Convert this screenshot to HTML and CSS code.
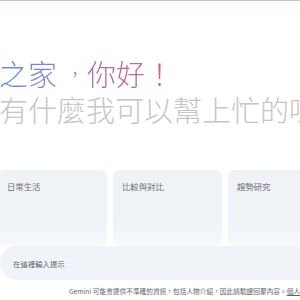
FILE: index.html
```html
<!DOCTYPE html>
<html lang="zh-Hant">
<head>
<meta charset="utf-8">
<link rel="stylesheet" href="styles.css">
</head>
<body>
<div class="topline"></div>
<main class="page">
  <h1 class="greeting">
    <span class="hello">之家<span class="comma">，</span>你好！</span>
    <span class="ask">有什麼我可以幫上忙的嗎？</span>
  </h1>
  <div class="cards">
    <div class="card">日常生活</div>
    <div class="card">比較與對比</div>
    <div class="card">趨勢研究</div>
  </div>
  <div class="prompt">在這裡輸入提示</div>
  <p class="footer">Gemini 可能會提供不準確的資訊，包括人物介紹，因此請驗證回覆內容。<a href="#">個人資料與 Gemini 應用程式</a></p>
</main>
</body>
</html>
```
FILE: styles.css
```css
html, body {
  margin: 0;
  padding: 0;
  background: #ffffff;
  width: 300px;
  height: 300px;
  overflow: hidden;
}
body {
  font-family: "Noto Sans CJK TC", "Noto Sans", sans-serif;
}
.topline {
  height: 1px;
  background: #b7d1b6;
}
.page {
  display: flex;
  flex-direction: column;
}
.greeting {
  margin: 54px 0 0 -1px;
  font-size: 29px;
  font-weight: 300;
  line-height: 36px;
  white-space: nowrap;
  display: flex;
  flex-direction: column;
}
.hello {
  display: inline-block;
  height: 36px;
  width: max-content;
  background: linear-gradient(90deg, #5b8cf0 0%, #8a7bd8 40%, #b46ea8 62%, #d85f6c 100%);
  -webkit-background-clip: text;
  background-clip: text;
  color: transparent;
}
.comma {
  display: inline-block;
  color: #9d77c8;
  font-size: 16px;
  line-height: 16px;
  width: 30px;
  text-align: center;
  vertical-align: baseline;
  transform: translate(3px, -6px);
}
.ask {
  color: #c4c7c5;
}
.cards {
  margin: 43px 0 0 -2px;
  display: flex;
  gap: 6px;
}
.card {
  flex: 0 0 109px;
  height: 76px;
  box-sizing: border-box;
  padding: 10px 9px;
  border-radius: 7px;
  background: linear-gradient(180deg, #eff2f7 0%, #eff2f7 68%, #f7f9fb 100%);
  font-size: 8.4px;
  line-height: 12px;
  color: #6b6f73;
  white-space: nowrap;
}
.prompt {
  height: 34px;
  width: 330px;
  border-radius: 17px;
  background: #f0f3f8;
  display: flex;
  align-items: center;
  padding-left: 13px;
  box-sizing: border-box;
  font-size: 7.4px;
  color: #5f6368;
}
.footer {
  margin: 7px 0 0 69px;
  font-size: 6.7px;
  line-height: 8px;
  color: #5f6368;
  white-space: nowrap;
}
.footer a {
  color: #5f6368;
  text-decoration: underline;
}
```
